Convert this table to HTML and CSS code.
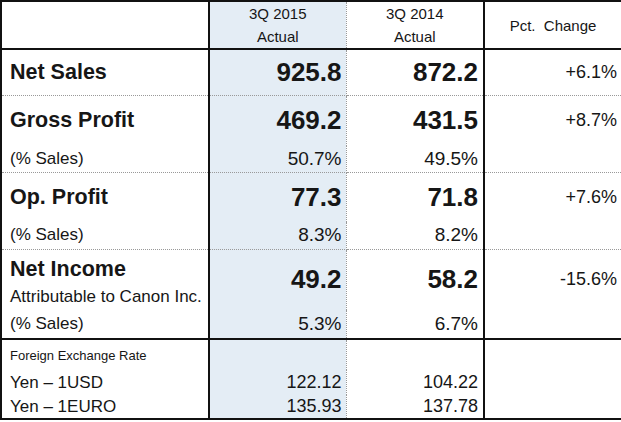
FILE: index.html
```html
<!DOCTYPE html>
<html>
<head>
<meta charset="utf-8">
<link rel="stylesheet" href="styles.css">
</head>
<body>
<table class="fin">
  <colgroup>
    <col class="c-label">
    <col class="c-cur">
    <col class="c-prev">
    <col class="c-chg">
  </colgroup>
  <tr class="r-head">
    <td class="label"></td>
    <td class="cur head"><div>3Q 2015</div><div>Actual</div></td>
    <td class="num head"><div>3Q 2014</div><div>Actual</div></td>
    <td class="chg head">Pct.&nbsp;&nbsp;Change</td>
  </tr>
  <tr class="r-main r-ns sep">
    <td class="label big">Net Sales</td>
    <td class="cur val">925.8</td>
    <td class="num val">872.2</td>
    <td class="chg pct">+6.1%</td>
  </tr>
  <tr class="r-main r-gp">
    <td class="label big">Gross Profit</td>
    <td class="cur val">469.2</td>
    <td class="num val">431.5</td>
    <td class="chg pct">+8.7%</td>
  </tr>
  <tr class="r-sub r-gps sep">
    <td class="label small">(% Sales)</td>
    <td class="cur sv">50.7%</td>
    <td class="num sv">49.5%</td>
    <td class="chg"></td>
  </tr>
  <tr class="r-main r-op">
    <td class="label big">Op. Profit</td>
    <td class="cur val">77.3</td>
    <td class="num val">71.8</td>
    <td class="chg pct">+7.6%</td>
  </tr>
  <tr class="r-sub r-ops sep">
    <td class="label small">(% Sales)</td>
    <td class="cur sv">8.3%</td>
    <td class="num sv">8.2%</td>
    <td class="chg"></td>
  </tr>
  <tr class="r-main r-ni">
    <td class="label ni">
      <div class="big ni-title">Net Income</div>
      <div class="small ni-sub">Attributable to Canon Inc.</div>
    </td>
    <td class="cur val">49.2</td>
    <td class="num val">58.2</td>
    <td class="chg pct">-15.6%</td>
  </tr>
  <tr class="r-sub r-nis strong">
    <td class="label small">(% Sales)</td>
    <td class="cur sv">5.3%</td>
    <td class="num sv">6.7%</td>
    <td class="chg"></td>
  </tr>
  <tr class="r-fx">
    <td class="label tiny">Foreign Exchange Rate</td>
    <td class="cur"></td>
    <td class="num"></td>
    <td class="chg"></td>
  </tr>
  <tr class="r-rate">
    <td class="label small">Yen – 1USD</td>
    <td class="cur rv">122.12</td>
    <td class="num rv">104.22</td>
    <td class="chg"></td>
  </tr>
  <tr class="r-rate r-last">
    <td class="label small">Yen – 1EURO</td>
    <td class="cur rv">135.93</td>
    <td class="num rv">137.78</td>
    <td class="chg"></td>
  </tr>
</table>
</body>
</html>
```

FILE: styles.css
```css
html, body {
  margin: 0;
  padding: 0;
  background: #ffffff;
}

body {
  font-family: "Liberation Sans", Arial, Helvetica, sans-serif;
  color: #161616;
}

.fin {
  border-collapse: collapse;
  table-layout: fixed;
  width: 621px;
  border: 2px solid #111;
}

.c-label { width: 208px; }
.c-cur { width: 137px; }
.c-prev { width: 138px; }
.c-chg { width: 138px; }

.fin td {
  padding: 0;
  vertical-align: middle;
  white-space: nowrap;
}

.label {
  padding-left: 8px !important;
  border-right: 2px solid #111;
  text-align: left;
}

.cur {
  background: #e4edf5;
  border-right: 1px dotted #999;
  text-align: right;
  padding-right: 4px !important;
}

.num {
  text-align: right;
  padding-right: 5px !important;
  border-right: 2px solid #111;
}

.chg {
  text-align: right;
  padding-right: 4px !important;
}

/* header */
.r-head { height: 47px; }
.r-head td { border-bottom: 2px solid #111; }
.head {
  text-align: center !important;
  padding-right: 0 !important;
  font-size: 15px;
  line-height: 23px;
}

/* row heights */
.r-ns { height: 46px; }
.r-gp { height: 51px; }
.r-gps { height: 26px; }
.r-op { height: 50px; }
.r-ops { height: 27px; }
.r-ni { height: 61px; }
.r-nis { height: 29px; }
.r-fx { height: 31px; }
.r-rate { height: 25px; }
.r-last { height: 24px; }

.sep td { border-bottom: 1px dotted #999; }
.strong td { border-bottom: 2px solid #111; }

.big {
  font-size: 21.5px;
  font-weight: bold;
}

.small {
  font-size: 17px;
}

.tiny {
  font-size: 13px;
}

.val {
  font-size: 26px;
  font-weight: bold;
}

.sv {
  font-size: 19px;
}

.pct {
  font-size: 18px;
}

.rv {
  font-size: 18px;
}

.ni {
  vertical-align: top !important;
  padding-top: 6px !important;
}

.ni-title {
  line-height: 26px;
}

.ni-sub {
  line-height: 26px;
  margin-top: 2px;
}
```
